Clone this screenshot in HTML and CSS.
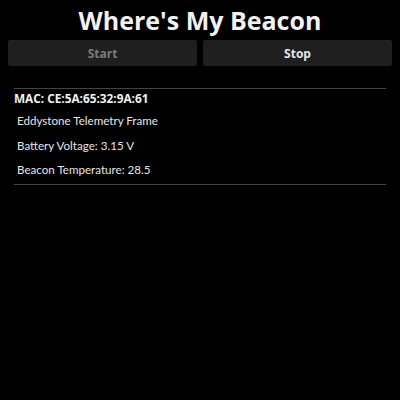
FILE: index.html
```html
<!DOCTYPE html>
<html lang="en">
<head>
  <meta charset="UTF-8" />
  <title>Where's My Beacon</title>
  <link rel="stylesheet" href="styles.css">
</head>
<body>
  <h1 class="title">Where's My Beacon</h1>
  <div class="buttons">
    <button class="btn disabled">Start</button>
    <button class="btn">Stop</button>
  </div>
  <div class="beacon">
    <div class="mac">MAC: CE:5A:65:32:9A:61</div>
    <div class="field">Eddystone Telemetry Frame</div>
    <div class="field">Battery Voltage: 3.15 V</div>
    <div class="field">Beacon Temperature: 28.5</div>
  </div>
</body>
</html>
```

FILE: styles.css
```css
body {
  margin: 0;
  padding: 0 8px;
  background: #000;
  color: #eee;
  font-family: "Open Sans", sans-serif;
}
.title {
  margin: 0;
  padding-top: 4px;
  text-align: center;
  font-size: 25px;
  font-weight: 700;
  line-height: 32px;
  color: #f2f2f2;
}
.buttons {
  display: flex;
  gap: 6px;
  margin-top: 4px;
}
.btn {
  flex: 1;
  height: 26px;
  background: #1f1f1f;
  border: none;
  border-radius: 2px;
  color: #e6e6e6;
  font-family: "Open Sans", sans-serif;
  font-size: 12px;
  font-weight: 700;
}
.btn.disabled {
  color: #7a7a7a;
}
.beacon {
  margin: 22px 6px 0;
  border-top: 1px solid #444;
  border-bottom: 1px solid #444;
  padding: 1px 0 6px;
}
.mac {
  font-size: 11.8px;
  font-weight: 700;
  line-height: 16px;
  color: #f2f2f2;
}
.field {
  margin-top: 7px;
  padding-left: 3px;
  font-family: Lato, sans-serif;
  font-size: 11.6px;
  line-height: 16px;
  color: #e6e6e6;
}
.field + .field {
  margin-top: 8.5px;
}
```
